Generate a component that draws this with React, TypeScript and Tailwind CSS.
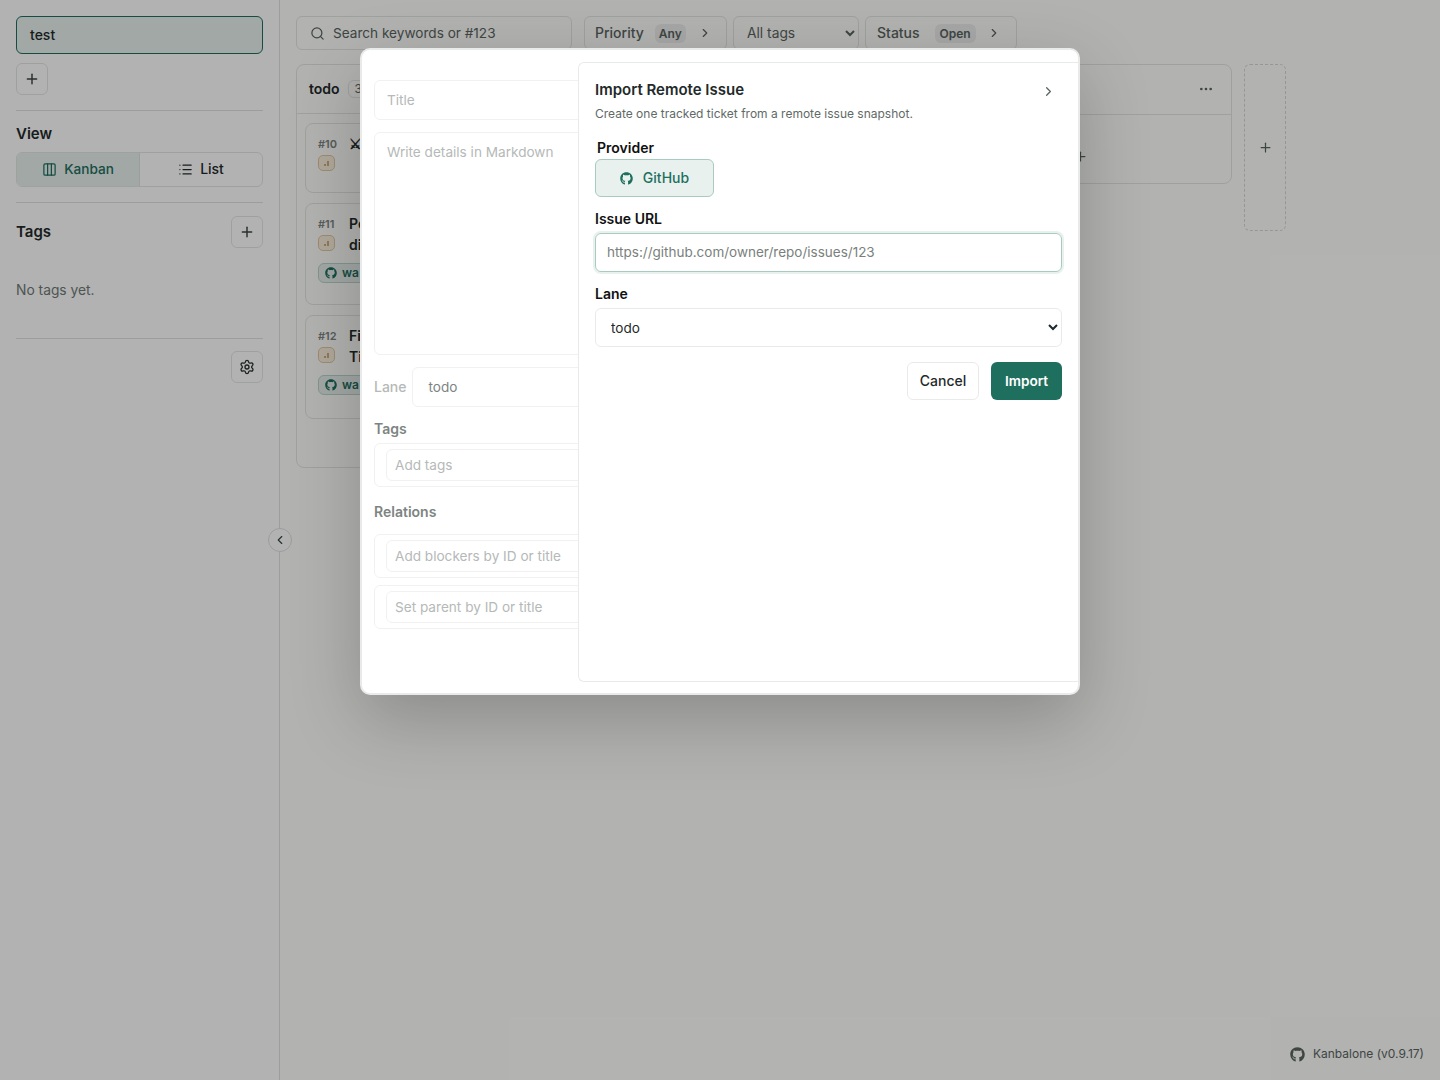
import React from 'react'
import { Plus, Columns3, List, Settings, Search, ChevronRight, ChevronLeft, Ellipsis } from 'lucide-react'
import { FaGithub } from 'react-icons/fa'

const cards = [
  { id: '#10', lines: ['⚔'], tag: false, h: 'h-[70px]' },
  { id: '#11', lines: ['Pe', 'di'], tag: true, h: 'h-[102px]' },
  { id: '#12', lines: ['Fi', 'Ti'], tag: true, h: 'h-[104px]' },
]

const PriorityBadge = () => (
  <span className="flex h-4 w-[17px] items-center justify-center rounded-[5px] border border-[#e3c9a0] bg-[#fbf1df]">
    <svg width="7" height="7" viewBox="0 0 7 7" fill="none" stroke="#a86a14" strokeWidth="1">
      <path d="M2 6V4M5 6V1" />
    </svg>
  </span>
)

const Sidebar = () => (
  <aside className="flex h-[1080px] w-[280px] shrink-0 flex-col border-r border-[#dfe2df] bg-white px-4 pt-4">
    <div className="flex h-[38px] items-center rounded-md border border-[#1f6f5f] bg-[#e8f1ee] px-[13px] text-sm font-medium text-[#1f2a2a]">
      test
    </div>
    <button className="mt-[9px] flex h-8 w-8 items-center justify-center rounded-md border border-[#e4e7e4] text-[#3c4644]">
      <Plus size={16} strokeWidth={2.2} />
    </button>
    <div className="mt-[15px] border-t border-[#e0e3e0]" />
    <div className="mt-[13px] text-[15px] font-semibold leading-5 text-[#1f2a2a]">View</div>
    <div className="mt-2 flex h-[35px] overflow-hidden rounded-md border border-[#e4e7e4] text-[13.6px] font-medium">
      <div className="flex w-[123px] items-center justify-center gap-[7px] border-r border-[#dfe3e0] bg-[#e8f1ee] pb-px text-[#1f6f5f]">
        <Columns3 size={15} />
        Kanban
      </div>
      <div className="flex flex-1 items-center justify-center gap-[7px] pb-px text-sm text-[#1f2a2a]">
        <List size={15} />
        List
      </div>
    </div>
    <div className="mt-[15px] border-t border-[#e0e3e0]" />
    <div className="mt-[13px] flex items-center justify-between">
      <div className="text-[15px] font-semibold text-[#1f2a2a]">Tags</div>
      <button className="flex h-8 w-8 items-center justify-center rounded-md border border-[#e4e7e4] text-[#3c4644]">
        <Plus size={16} strokeWidth={2.2} />
      </button>
    </div>
    <div className="mt-[32px] text-[13.8px] leading-5 text-[#6f7a77]">No tags yet.</div>
    <div className="mt-[38px] border-t border-[#e0e3e0]" />
    <div className="mt-3 flex justify-end">
      <button className="flex h-8 w-8 items-center justify-center rounded-md border border-[#e4e7e4] text-[#2a3331]">
        <Settings size={16} />
      </button>
    </div>
  </aside>
)

const TopBar = () => (
  <div className="flex h-[34px] items-stretch text-sm text-[#5a6562]">
    <div className="flex w-[276px] items-center gap-2 rounded-md border border-[#e4e7e4] px-[13px] text-[13.6px]">
      <Search size={15} />
      <span className="pt-px">Search keywords or #123</span>
    </div>
    <div className="ml-3 flex w-[143px] items-center rounded-md border border-[#e4e7e4] pl-[10px] font-medium">
      Priority
      <span className="ml-[11px] rounded-md bg-[#eef0ee] px-[4px] text-xs font-semibold leading-[19px]">Any</span>
      <ChevronRight size={14} className="ml-[12px]" />
    </div>
    <select className="ml-[6px] w-[126px] rounded-md border border-[#e4e7e4] pl-[9px] text-[13.8px]">
      <option>All tags</option>
    </select>
    <div className="ml-[6px] flex w-[152px] items-center rounded-md border border-[#e4e7e4] pl-[11px] font-medium">
      Status
      <span className="ml-[15px] rounded-md bg-[#eef0ee] px-[5px] text-xs font-semibold leading-[19px]">Open</span>
      <ChevronRight size={14} className="ml-[11px]" />
    </div>
  </div>
)

const Board = () => (
  <div className="mt-[14px] flex items-start">
    <section className="h-[404px] w-[304px] rounded-lg border border-[#e4e7e4]">
      <header className="flex h-[49px] items-center gap-2 border-b border-[#e4e7e4] px-3 pb-px">
        <span className="text-sm font-semibold text-[#1f2a2a]">todo</span>
        <span className="rounded-md border border-[#e4e7e4] px-[6px] text-xs text-[#5a6562]">3</span>
      </header>
      <div className="flex flex-col gap-[10px] px-2 pt-[9px]">
        {cards.map((card) => (
          <article key={card.id} className={`${card.h} rounded-lg border border-[#e4e7e4] px-3 pt-[11px]`}>
            <div className="flex gap-[10px]">
              <div className="flex w-[21px] flex-col gap-[2px]">
                <span className="text-[11px] font-semibold leading-[18px] text-[#7b8582]">{card.id}</span>
                <PriorityBadge />
              </div>
              <div className="-mt-[2px] text-sm font-semibold leading-[21px] text-[#1f2a2a]">
                {card.lines.map((line) => (
                  <div key={line}>{line}</div>
                ))}
              </div>
            </div>
            {card.tag && (
              <div className="mt-2 flex h-5 w-[60px] items-center gap-[5px] rounded-md border border-[#bcd6cd] bg-[#e8f1ee] px-[6px] text-xs font-semibold text-[#1f6f5f]">
                <FaGithub size={12} />
                wa
              </div>
            )}
          </article>
        ))}
      </div>
    </section>
    <section className="ml-[328px] h-[120px] w-[304px] rounded-lg border border-[#e4e7e4]">
      <header className="flex h-[50px] items-center justify-end border-b border-[#e4e7e4] pb-[2px] pr-[17px] text-[#5a6562]">
        <Ellipsis size={16} />
      </header>
      <div className="flex justify-center pt-[34px] text-[#5a6562]">
        <Plus size={15} />
      </div>
    </section>
    <button className="ml-3 flex h-[167px] w-[42px] items-center justify-center rounded-md border border-dashed border-[#d5d9d6] text-[#5a6562]">
      <Plus size={15} />
    </button>
  </div>
)

const GhostField = ({ placeholder }: { placeholder: string }) => (
  <div className="rounded-md border border-[#f0f1f0] px-[11px] py-[5px]">
    <div className="flex h-8 items-center rounded-md border border-[#f0f1f0] px-2 text-[13.6px] text-[#b5b9b7]">{placeholder}</div>
  </div>
)

const TicketForm = () => (
  <div className="flex w-[692px] flex-col px-3 pt-[30px]">
    <div className="flex h-10 items-center rounded-md border border-[#f0f1f0] px-3 text-[13.6px] text-[#b5b9b7]">Title</div>
    <div className="mt-3 h-[223px] rounded-md border border-[#f0f1f0] px-3 pt-[9px] text-[13.6px] leading-5 text-[#b5b9b7]">Write details in Markdown</div>
    <div className="mt-3 flex items-center gap-[5px]">
      <span className="text-sm font-medium text-[#b5b9b7]">Lane</span>
      <div className="flex h-10 flex-1 items-center rounded-md border border-[#f0f1f0] px-4 text-[13.6px] text-[#7d8482]">todo</div>
    </div>
    <div className="mt-3 text-sm font-semibold leading-5 text-[#7d8482]">Tags</div>
    <div className="mt-1">
      <GhostField placeholder="Add tags" />
    </div>
    <div className="mt-[15px] text-sm font-semibold leading-5 text-[#7d8482]">Relations</div>
    <div className="mt-3 flex flex-col gap-[7px]">
      <GhostField placeholder="Add blockers by ID or title" />
      <GhostField placeholder="Set parent by ID or title" />
    </div>
  </div>
)

const ImportPanel = () => (
  <div className="absolute bottom-[11px] right-0 top-[12px] flex w-[500px] flex-col rounded-l-md border-y border-l border-[#e9ebe9] bg-white pl-4 pr-4 pt-[17px]">
    <div className="flex items-center justify-between pr-[6px]">
      <h2 className="text-[15px] font-semibold leading-5 text-[#1f2a2a]">Import Remote Issue</h2>
      <ChevronRight size={15} className="mt-[3px] text-[#5a6562]" />
    </div>
    <p className="mt-[6px] text-xs leading-4 text-[#5f6a67]">Create one tracked ticket from a remote issue snapshot.</p>
    <label className="ml-[2px] mt-[16px] text-sm font-semibold leading-5 text-[#111]">Provider</label>
    <button className="mt-[1px] flex h-[38px] w-[119px] items-center justify-center gap-[10px] rounded-md border border-[#a9cbbf] bg-[#e8f1ee] text-sm font-medium text-[#1f6f5f]">
      <FaGithub size={13} />
      GitHub
    </button>
    <label className="mt-3 text-sm font-semibold leading-5 text-[#111]">Issue URL</label>
    <input
      readOnly
      placeholder="https://github.com/owner/repo/issues/123"
      className="mt-1 h-[39px] rounded-md border border-[#a9cbbf] px-[11px] pb-[2px] text-[13.5px] text-[#1f2a2a] shadow-[0_0_0_2px_#e8f1ee] outline-none placeholder:text-[#7a7f7d]"
    />
    <label className="mt-3 text-sm font-semibold leading-5 text-[#111]">Lane</label>
    <select className="mt-1 h-[39px] rounded-md border border-[#e9ebe9] bg-white pl-[11px] text-[13.6px] text-[#1f2a2a]">
      <option>todo</option>
    </select>
    <div className="mt-[15px] flex justify-end gap-3">
      <button className="h-[38px] w-[72px] rounded-md border border-[#e9ebe9] text-sm font-medium text-[#1f2a2a]">Cancel</button>
      <button className="h-[38px] w-[71px] rounded-md bg-[#1f6f5f] text-[13.6px] font-semibold text-white">Import</button>
    </div>
  </div>
)

export default function App() {
  return (
    <div className="relative flex h-[1080px] w-[1440px] overflow-hidden bg-[#fffffd] font-['Inter',sans-serif]">
      <Sidebar />
      <main className="flex-1 px-4 pt-4">
        <TopBar />
        <Board />
      </main>
      <div className="absolute bottom-[18px] right-4 flex items-center gap-2 text-xs text-[#5a6562]">
        <FaGithub size={15} />
        Kanbalone (v0.9.17)
      </div>
      <button className="absolute left-[268px] top-[528px] flex h-6 w-6 items-center justify-center rounded-full border border-[#dfe2df] bg-white text-[#3c4644]">
        <ChevronLeft size={14} />
      </button>
      <div className="absolute inset-0 bg-black/30" />
      <div className="absolute left-[360px] top-[48px] h-[647px] w-[720px] overflow-hidden rounded-[10px] border-2 border-[#e8ebe9] bg-white shadow-[0_24px_70px_rgba(0,0,0,0.22)]">
        <TicketForm />
        <ImportPanel />
      </div>
    </div>
  )
}
